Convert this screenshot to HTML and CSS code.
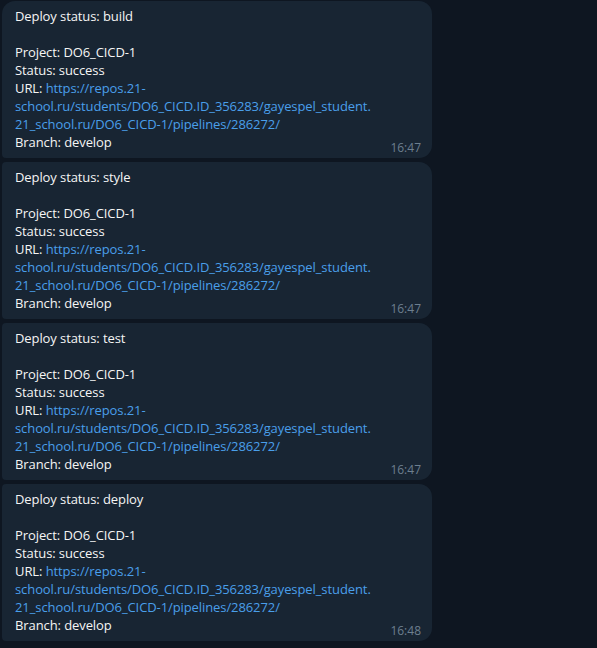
FILE: index.html
```html
<!DOCTYPE html>
<html>
<head>
<meta charset="utf-8">
<link rel="stylesheet" href="styles.css">
</head>
<body>
<div class="chat">
  <div class="bubble first">
    <div class="line">Deploy status: build</div>
    <div class="line">&nbsp;</div>
    <div class="line">Project: DO6_CICD-1</div>
    <div class="line">Status: success</div>
    <div class="line">URL: <a class="link">https://repos.21-<br>school.ru/students/DO6_CICD.ID_356283/gayespel_student.<br>21_school.ru/DO6_CICD-1/pipelines/286272/</a></div>
    <div class="last"><span>Branch: develop</span><span class="time">16:47</span></div>
  </div>
  <div class="bubble">
    <div class="line">Deploy status: style</div>
    <div class="line">&nbsp;</div>
    <div class="line">Project: DO6_CICD-1</div>
    <div class="line">Status: success</div>
    <div class="line">URL: <a class="link">https://repos.21-<br>school.ru/students/DO6_CICD.ID_356283/gayespel_student.<br>21_school.ru/DO6_CICD-1/pipelines/286272/</a></div>
    <div class="last"><span>Branch: develop</span><span class="time">16:47</span></div>
  </div>
  <div class="bubble">
    <div class="line">Deploy status: test</div>
    <div class="line">&nbsp;</div>
    <div class="line">Project: DO6_CICD-1</div>
    <div class="line">Status: success</div>
    <div class="line">URL: <a class="link">https://repos.21-<br>school.ru/students/DO6_CICD.ID_356283/gayespel_student.<br>21_school.ru/DO6_CICD-1/pipelines/286272/</a></div>
    <div class="last"><span>Branch: develop</span><span class="time">16:47</span></div>
  </div>
  <div class="bubble">
    <div class="line">Deploy status: deploy</div>
    <div class="line">&nbsp;</div>
    <div class="line">Project: DO6_CICD-1</div>
    <div class="line">Status: success</div>
    <div class="line">URL: <a class="link">https://repos.21-<br>school.ru/students/DO6_CICD.ID_356283/gayespel_student.<br>21_school.ru/DO6_CICD-1/pipelines/286272/</a></div>
    <div class="last"><span>Branch: develop</span><span class="time">16:48</span></div>
  </div>
</div>
</body>
</html>
```
FILE: styles.css
```css
html, body {
  margin: 0;
  padding: 0;
  background: #0e1621;
  height: 100%;
}
body {
  font-family: "Open Sans", "Noto Sans", sans-serif;
  font-size: 13px;
  letter-spacing: -0.09px;
  color: #f5f5f5;
  overflow: hidden;
}
.chat {
  display: flex;
  flex-direction: column;
  gap: 4px;
  padding: 1px 0 0 2px;
}
.bubble {
  width: 430px;
  box-sizing: border-box;
  height: 157px;
  background: #182533;
  border-radius: 4px 13px 13px 4px;
  padding: 6px 11px 7px 13px;
  line-height: 18px;
}
.bubble.first {
  border-top-left-radius: 13px;
}
.link {
  color: #4a9fea;
  text-decoration: none;
}
.last {
  display: flex;
  justify-content: space-between;
  align-items: flex-end;
}
.time {
  font-size: 12px;
  letter-spacing: 0;
  color: #6d7f8f;
  margin-bottom: -5px;
  line-height: 16px;
}
```
